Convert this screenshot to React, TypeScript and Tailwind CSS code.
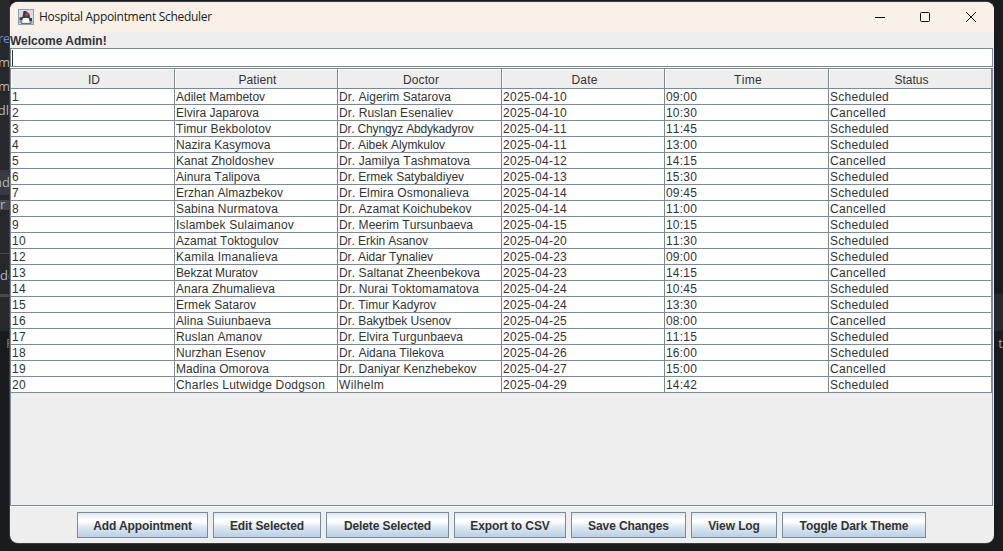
import { Fragment } from "react";

type Row = [string, string, string, string, string, string];

const columns = ["ID", "Patient", "Doctor", "Date", "Time", "Status"];

const rows: Row[] = [
  ["1", "Adilet Mambetov", "Dr. Aigerim Satarova", "2025-04-10", "09:00", "Scheduled"],
  ["2", "Elvira Japarova", "Dr. Ruslan Esenaliev", "2025-04-10", "10:30", "Cancelled"],
  ["3", "Timur Bekbolotov", "Dr. Chyngyz Abdykadyrov", "2025-04-11", "11:45", "Scheduled"],
  ["4", "Nazira Kasymova", "Dr. Aibek Alymkulov", "2025-04-11", "13:00", "Scheduled"],
  ["5", "Kanat Zholdoshev", "Dr. Jamilya Tashmatova", "2025-04-12", "14:15", "Cancelled"],
  ["6", "Ainura Talipova", "Dr. Ermek Satybaldiyev", "2025-04-13", "15:30", "Scheduled"],
  ["7", "Erzhan Almazbekov", "Dr. Elmira Osmonalieva", "2025-04-14", "09:45", "Scheduled"],
  ["8", "Sabina Nurmatova", "Dr. Azamat Koichubekov", "2025-04-14", "11:00", "Cancelled"],
  ["9", "Islambek Sulaimanov", "Dr. Meerim Tursunbaeva", "2025-04-15", "10:15", "Scheduled"],
  ["10", "Azamat Toktogulov", "Dr. Erkin Asanov", "2025-04-20", "11:30", "Scheduled"],
  ["12", "Kamila Imanalieva", "Dr. Aidar Tynaliev", "2025-04-23", "09:00", "Scheduled"],
  ["13", "Bekzat Muratov", "Dr. Saltanat Zheenbekova", "2025-04-23", "14:15", "Cancelled"],
  ["14", "Anara Zhumalieva", "Dr. Nurai Toktomamatova", "2025-04-24", "10:45", "Scheduled"],
  ["15", "Ermek Satarov", "Dr. Timur Kadyrov", "2025-04-24", "13:30", "Scheduled"],
  ["16", "Alina Suiunbaeva", "Dr. Bakytbek Usenov", "2025-04-25", "08:00", "Cancelled"],
  ["17", "Ruslan Amanov", "Dr. Elvira Turgunbaeva", "2025-04-25", "11:15", "Scheduled"],
  ["18", "Nurzhan Esenov", "Dr. Aidana Tilekova", "2025-04-26", "16:00", "Scheduled"],
  ["19", "Madina Omorova", "Dr. Daniyar Kenzhebekov", "2025-04-27", "15:00", "Cancelled"],
  ["20", "Charles Lutwidge Dodgson", "Wilhelm", "2025-04-29", "14:42", "Scheduled"],
];

const buttons = [
  { label: "Add Appointment", width: "w-[131px]" },
  { label: "Edit Selected", width: "w-[108px]" },
  { label: "Delete Selected", width: "w-[123px]" },
  { label: "Export to CSV", width: "w-[112px]" },
  { label: "Save Changes", width: "w-[115px]" },
  { label: "View Log", width: "w-[86px]" },
  { label: "Toggle Dark Theme", width: "w-[144px]" },
];

const grid = "grid grid-cols-[164px_163px_164px_163px_164px_163px]";

const roundingGroups: [string, number][] = [
  ["0123456789abdeghnopquiljwCDHNRULG", 0.33],
  [" .:tfIOTZWF", -0.33],
  ["m", 1],
  ["vyxAM", -1],
  ["z", -0.5],
];

function swingTracking(text: string): string {
  let delta = 0;
  for (const char of text) {
    const group = roundingGroups.find(([chars]) => chars.includes(char));
    delta += group ? group[1] : 0;
  }
  return `${(delta / text.length).toFixed(3)}px`;
}

function JavaIcon() {
  return (
    <svg width="16" height="16" viewBox="0 0 16 16" className="shrink-0">
      <rect x="0.5" y="0.5" width="15" height="15" fill="#d3dde7" stroke="#8c9fb3" />
      <path d="M5.5 2 H8 L11.5 5 L12 9 H14 V13 H12 L10.5 9 H5.5 L4 11 H1.5 V8.5 L4.5 8Z" fill="#363b40" />
      <path d="M1.5 11 H4.5 V14 H1.5Z M11.5 12 H14.5 V14.5 H11.5Z" fill="#89939d" />
      <path d="M5 9.5 Q8 8 10.5 9.5 L11.5 13.5 H4.5Z" fill="#f8fafb" />
      <path d="M3 14.5 H13" stroke="#69737d" />
      <circle cx="8.7" cy="5.5" r="1.9" fill="#df2926" />
    </svg>
  );
}

function TitleBar() {
  return (
    <header className="flex h-[30px] shrink-0 items-center bg-[#f9f1e7] pl-2">
      <JavaIcon />
      <span className="ml-[5px] font-['Open_Sans',sans-serif] text-[12px] leading-4 tracking-[-0.3px] text-[#1b1b1b]">
        Hospital Appointment Scheduler
      </span>
      <svg width="104" height="12" viewBox="0 0 104 12" fill="none" stroke="#111" className="mr-[16px] mb-px ml-auto">
        <path d="M1 6.5H11" />
        <rect x="46.5" y="1.5" width="9" height="9" rx="1" />
        <path d="M92 1 L102 11 M102 1 L92 11" />
      </svg>
    </header>
  );
}

function EditorBehindLeft() {
  return (
    <aside className="flex w-[10px] shrink-0 flex-col items-end overflow-hidden bg-[#26282b] font-['Open_Sans',sans-serif] text-[13px] whitespace-nowrap text-[#b4b7bd]">
      <div className="flex h-[170px] flex-col items-end pt-[26px] leading-6">
        <span className="tracking-[-0.3px] text-[#5a8ce0]">re</span>
        <span>m</span>
        <span>m</span>
        <span className="pr-px">dl</span>
      </div>
      <div className="flex h-[25px] w-full justify-end bg-[#393b40] leading-[25px]">nd</div>
      <div className="h-[5px]" />
      <div className="flex h-[10px] w-full items-center bg-[#45474b]">r</div>
      <div className="h-[43px]" />
      <div className="h-px w-full bg-[#45474b]" />
      <div className="flex h-10 w-full items-center pt-1">do</div>
      <div className="h-[3px] w-full bg-[#484a4e]" />
      <div className="h-[34px]" />
      <div className="w-full grow bg-[#1a1b1d] pt-[3px] pl-[6px] leading-[18px] text-[#8b8178]">F</div>
    </aside>
  );
}

function EditorBehindRight() {
  return (
    <aside className="flex w-[9px] shrink-0 flex-col bg-[#1a1b1d] pt-[294px]">
      <div className="h-[37px] bg-[#26282b]" />
      <span className="pt-[4px] text-right font-['Open_Sans',sans-serif] text-[13px] leading-4 text-[#9ba0a8]">t</span>
    </aside>
  );
}

export default function App() {
  return (
    <div className="flex h-[551px] w-[1003px] overflow-hidden bg-[#1b1c1e] font-['Liberation_Sans',Arial,sans-serif] text-[12px] text-[#333]">
      <EditorBehindLeft />
      <main className="mt-[2px] flex h-[541px] w-[984px] shrink-0 flex-col overflow-hidden rounded-lg bg-[#eee] shadow-[0_0_0_1px_#3b3d40]">
        <TitleBar />
        <div className="h-4 shrink-0 text-[12px] leading-[18px] font-bold whitespace-nowrap">
          Welcome Admin!
        </div>
        <div className="mr-px flex h-[19px] shrink-0 border border-[#7a8a99] bg-white pt-px pl-px">
          <div className="h-4 w-px bg-[#333]" />
        </div>
        <div className="h-px shrink-0 bg-white" />
        <div className="mr-px flex h-[438px] shrink-0 flex-col border border-[#7a8a99]">
          <div className={`${grid} h-5 w-[981px] shrink-0`}>
            {columns.map((name) => (
              <div
                key={name}
                className="h-5 border-r border-b border-[#7a8a99] pt-[3px] pl-[3px] text-center leading-4 shadow-[inset_1px_1px_0_#fff] [font-kerning:none]"
                style={{ letterSpacing: swingTracking(name) }}
              >
                {name}
              </div>
            ))}
          </div>
          <div className={`${grid} w-[981px] auto-rows-[16px]`}>
            {rows.map((row) => (
              <Fragment key={row[0]}>
                {row.map((cell, i) => (
                  <div
                    key={columns[i]}
                    className="border-r border-b border-[#7a8a99] bg-white pl-px leading-4 whitespace-nowrap [font-kerning:none]"
                    style={{ letterSpacing: swingTracking(cell) }}
                  >
                    {cell}
                  </div>
                ))}
              </Fragment>
            ))}
          </div>
        </div>
        <div className="h-px shrink-0 bg-white" />
        <footer className="flex gap-[5px] pt-[5px] pl-[67px]">
          {buttons.map((button) => (
            <button
              key={button.label}
              className={`${button.width} h-[26px] border border-[#7a8a99] bg-[linear-gradient(#dde8f3_0%,#ffffff_30%,#ffffff_35%,#dce7f1_60%,#b8cfe5_100%)] pt-px text-center leading-[25px] font-bold tracking-[-0.1px] whitespace-nowrap`}
            >
              {button.label}
            </button>
          ))}
        </footer>
      </main>
      <EditorBehindRight />
    </div>
  );
}
